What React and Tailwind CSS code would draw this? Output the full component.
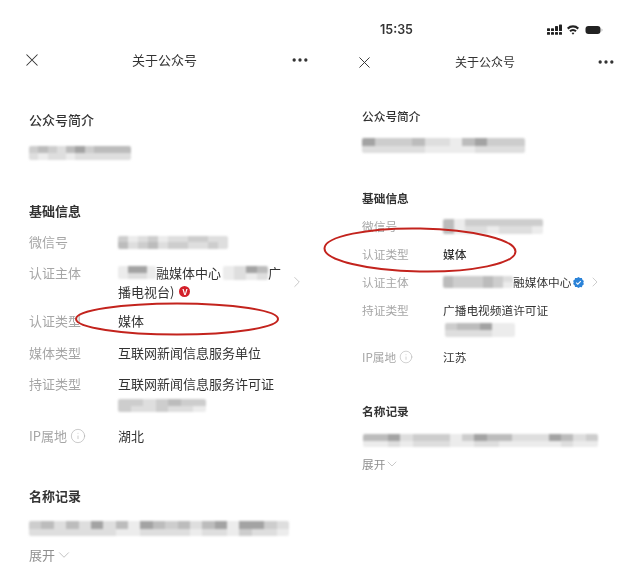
import { MoreHorizontal, ChevronRight, ChevronDown, Info } from 'lucide-react';

const a = 'bg-[#a3a3a3]';
const b = 'bg-[#bcbcbc]';
const c = 'bg-[#cdcdcd]';
const d = 'bg-[#dedede]';
const e = 'bg-[#ececec]';

function Blur({ className, top, bottom }) {
  return (
    <div className={`flex flex-col overflow-hidden rounded-[2px] blur-[0.8px] ${className}`}>
      <div className="flex flex-1">
        {top.map((cell, i) => <span key={i} className={`flex-1 ${cell}`} />)}
      </div>
      <div className="flex flex-1">
        {bottom.map((cell, i) => <span key={i} className={`flex-1 ${cell}`} />)}
      </div>
    </div>
  );
}

function Row({ label, labelWidth, children, className = '' }) {
  return (
    <div className={`flex ${className}`}>
      <div className={`shrink-0 text-[#a6a6a6] ${labelWidth}`}>{label}</div>
      {children}
    </div>
  );
}

function Header({ className, size, titleClass, dotsClass }) {
  return (
    <div className={`grid grid-cols-[1fr_auto_1fr] items-center h-6 ${className}`}>
      <svg width={size} height={size} viewBox="0 0 12 12" stroke="#333" strokeWidth="1.05" fill="none">
        <path d="M0.5 0.5l11 11M11.5 0.5l-11 11" />
      </svg>
      <div className={`text-[#333] ${titleClass}`}>关于公众号</div>
      <MoreHorizontal size={20} strokeWidth={2} className={`justify-self-end text-[#333] ${dotsClass}`} />
    </div>
  );
}

function StatusBar() {
  return (
    <div className="flex items-center justify-between h-5 mt-5 ml-[47px] w-[224px]">
      <span className="text-[12.5px] font-semibold text-[#333] font-['Inter',sans-serif]">15:35</span>
      <svg width="57" height="12" viewBox="0 0 57 12" fill="#222">
        <rect x="0" y="4.2" width="3" height="2.8" rx="0.6" /><rect x="0" y="8" width="3" height="2.8" rx="0.6" />
        <rect x="4" y="4.2" width="3" height="2.8" rx="0.6" /><rect x="4" y="8" width="3" height="2.8" rx="0.6" />
        <rect x="8" y="2" width="3" height="5" rx="0.6" /><rect x="8" y="8" width="3" height="2.8" rx="0.6" />
        <rect x="12" y="0.6" width="3" height="6.4" rx="0.6" /><rect x="12" y="8" width="3" height="2.8" rx="0.6" />
        <path d="M20 3.8a8.6 8.6 0 0 1 12 0l-1.4 1.6a6.6 6.6 0 0 0-9.2 0zM22.3 6.5a5.2 5.2 0 0 1 7.4 0l-1.4 1.6a3.2 3.2 0 0 0-4.6 0zM24.6 9.1a2 2 0 0 1 2.8 0L26 10.8z" />
        <rect x="38.5" y="2" width="15" height="8" rx="3" />
        <path d="M54.6 4.6c1 .3 1 2.8 0 3.1z" fill="#999" />
      </svg>
    </div>
  );
}

function Left() {
  const lw = 'w-[89px]';
  return (
    <div className="w-[333px] shrink-0 pt-12">
      <Header className="ml-[26px] w-[277px]" size={12} titleClass="text-[13px] leading-5" dotsClass="-mr-[7px]" />
      <div className="ml-[29px] text-[13px] leading-5 text-[#333]">
        <div className="mt-[38px] font-medium">公众号简介</div>
        <Blur className="mt-4 w-[102px] h-[14px]"
          top={[c, b, c, d, b, a, c, b, b, b, b]}
          bottom={[d, e, d, d, e, d, d, d, d, d, d]} />
        <div className="mt-[41px] font-semibold">基础信息</div>
        <Row label="微信号" labelWidth={lw} className="mt-[11px] items-center">
          <Blur className="w-[110px] h-[13px]"
            top={[c, e, d, c, e, d, d, c, c, d, d]}
            bottom={[b, d, c, b, d, c, c, d, d, c, d]} />
        </Row>
        <Row label="认证主体" labelWidth={lw} className="mt-[11px] w-[273px] leading-[19px]">
          <div className="flex-1 min-w-0">
            <div className="flex items-center">
              <Blur className="w-[38px] h-[13px]" top={[e, a, a, e]} bottom={[e, d, d, e]} />
              <span>融媒体中心</span>
              <Blur className="w-[45px] h-[14px] ml-[2px]" top={[e, d, a, b]} bottom={[e, d, e, d]} />
              <span>广</span>
            </div>
            <div className="flex items-center">
              <span>播电视台)</span>
              <span className="ml-[5px] flex items-center justify-center w-[11px] h-[11px] rounded-full bg-[#d3202a] text-white text-[8px] leading-none font-bold">V</span>
            </div>
          </div>
          <ChevronRight size={18} strokeWidth={1} className="self-center text-[#b5b5b5] -mr-[4px]" />
        </Row>
        <Row label="认证类型" labelWidth={lw} className="mt-[10px]"><span>媒体</span></Row>
        <Row label="媒体类型" labelWidth={lw} className="mt-3"><span>互联网新闻信息服务单位</span></Row>
        <Row label="持证类型" labelWidth={lw} className="mt-[11px]"><span>互联网新闻信息服务许可证</span></Row>
        <Blur className="mt-[5px] ml-[89px] w-[88px] h-[13px]" top={[c, c, d, c, b, c, c]} bottom={[c, d, d, c, d, d, e]} />
        <Row label={<span className="flex items-center">IP属地<Info size={16} strokeWidth={0.9} className="ml-[3px] text-[#a8a8a8]" /></span>} labelWidth={lw} className="mt-[14px]">
          <span>湖北</span>
        </Row>
        <div className="mt-10 font-semibold">名称记录</div>
        <Blur className="mt-[15px] w-[260px] h-[15px]"
          top={[c, b, d, b, d, a, d, b, e, a, b, c, b, d, b, a, e, a, a, c, d]}
          bottom={[d, d, d, d, d, d, d, e, e, d, d, d, d, e, d, d, e, c, d, d, e]} />
        <div className="mt-[9px] flex items-center text-[#8f8f8f]">
          展开<ChevronDown size={18} strokeWidth={0.9} className="text-[#a6a6a6]" />
        </div>
      </div>
    </div>
  );
}

function Right() {
  const lw = 'w-[81px]';
  return (
    <div className="flex-1">
      <StatusBar />
      <Header className="mt-[10px] ml-[26px] w-[252px]" size={11} titleClass="text-[12px] leading-5" dotsClass="-mr-[5px]" />
      <div className="ml-[29px] text-[11.7px] leading-5 text-[#333]">
        <div className="mt-[32px] font-medium">公众号简介</div>
        <Blur className="mt-3 w-[163px] h-[15px]"
          top={[a, c, c, c, b, d, d, e, b, a, c, c, c]}
          bottom={[d, d, d, d, d, e, e, e, e, d, d, d, d]} />
        <div className="mt-[35px] font-semibold">基础信息</div>
        <Row label="微信号" labelWidth={lw} className="mt-2 items-center">
          <Blur className="w-[100px] h-[15px]" top={[b, e, c, c, c, c, c, c, c]} bottom={[b, e, d, d, e, d, d, d, e]} />
        </Row>
        <Row label="认证类型" labelWidth={lw} className="mt-2"><span className="font-medium">媒体</span></Row>
        <Row label="认证主体" labelWidth={lw} className="mt-2 items-center">
          <Blur className="w-[70px] h-[12px]" top={[b, c, c, c, b, c, d]} bottom={[b, c, c, c, b, c, e]} />
          <span>融媒体中心</span>
          <svg width="11" height="11" viewBox="0 0 11 11" className="ml-[2px]">
            <path d="M5.5 0l1.5 1.1 1.9-.1.5 1.8 1.5 1.1-.6 1.7.6 1.7-1.5 1.1-.5 1.8-1.9-.1L5.5 11 4 9.9l-1.9.1-.5-1.8L.1 7.1l.6-1.7L.1 3.8l1.5-1.1L2.1 1 4 1.1z" fill="#2b83d8" />
            <path d="M3.2 5.6l1.6 1.6 3-3" stroke="#fff" strokeWidth="1.1" fill="none" />
          </svg>
          <ChevronRight size={16} strokeWidth={1} className="ml-[3px] text-[#b5b5b5]" />
        </Row>
        <Row label="持证类型" labelWidth={lw} className="mt-2"><span>广播电视频道许可证</span></Row>
        <Blur className="mt-[3px] ml-[83px] w-[70px] h-[14px]" top={[c, b, b, a, e, e]} bottom={[d, d, d, d, e, e]} />
        <Row label={<span className="flex items-center">IP属地<Info size={14} strokeWidth={0.9} className="ml-[3px] text-[#a8a8a8]" /></span>} labelWidth={lw} className="mt-[10px]">
          <span>江苏</span>
        </Row>
        <div className="mt-[34px] font-semibold">名称记录</div>
        <Blur className="mt-[13px] w-[235px] h-[13px] ml-px"
          top={[b, b, a, d, c, c, c, e, c, a, b, b, d, d, d, a, b, d, c]}
          bottom={[e, e, d, e, d, d, d, e, e, d, d, e, e, e, e, e, d, e, e]} />
        <div className="mt-[7px] flex items-center text-[#8f8f8f]">
          展开<ChevronDown size={16} strokeWidth={0.9} className="-ml-px text-[#a6a6a6]" />
        </div>
      </div>
    </div>
  );
}

export default function App() {
  return (
    <div className="relative flex w-[640px] h-[585px] overflow-hidden bg-white blur-[0.3px] font-['Noto_Sans_CJK_SC','Noto_Sans',sans-serif]">
      <Left />
      <Right />
      {/* hand-drawn red marks */}
      <svg width="640" height="585" className="absolute inset-0 pointer-events-none" fill="none" stroke="#c3231d" strokeWidth="2">
        <ellipse cx="177" cy="319" rx="101" ry="15.5" />
        <ellipse cx="420" cy="250" rx="95.5" ry="21.5" transform="rotate(1 420 250)" />
      </svg>
    </div>
  );
}
